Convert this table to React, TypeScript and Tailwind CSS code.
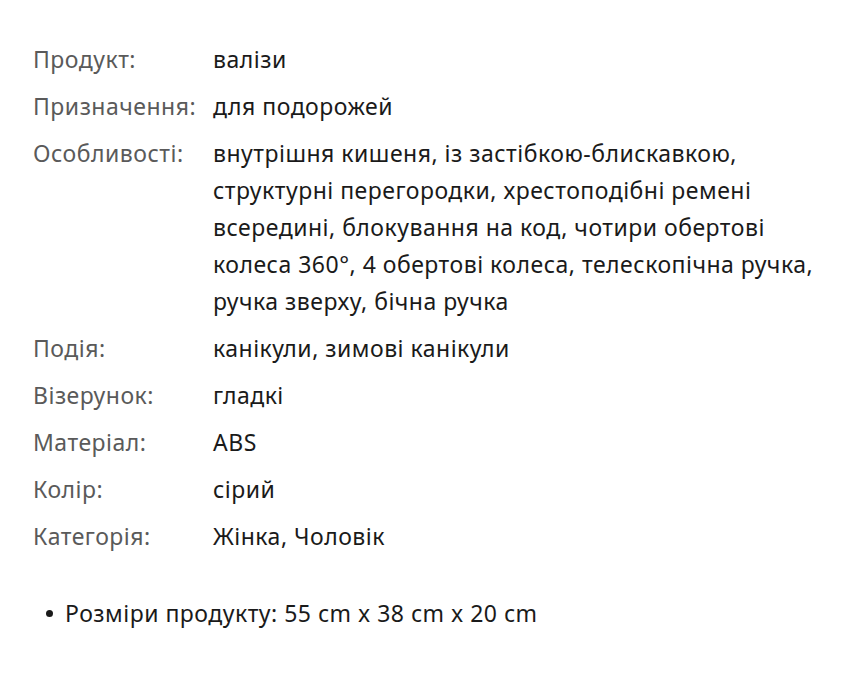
const rows: [string, string[]][] = [
  ["Продукт:", ["валізи"]],
  ["Призначення:", ["для подорожей"]],
  [
    "Особливості:",
    [
      "внутрішня кишеня, із застібкою-блискавкою,",
      "структурні перегородки, хрестоподібні ремені",
      "всередині, блокування на код, чотири обертові",
      "колеса 360°, 4 обертові колеса, телескопічна ручка,",
      "ручка зверху, бічна ручка",
    ],
  ],
  ["Подія:", ["канікули, зимові канікули"]],
  ["Візерунок:", ["гладкі"]],
  ["Матеріал:", ["ABS"]],
  ["Колір:", ["сірий"]],
  ["Категорія:", ["Жінка, Чоловік"]],
];

export default function App() {
  return (
    <div
      className="w-[866px] h-[699px] bg-white pl-[33px] pt-[41px] tracking-[0.5px]"
      style={{ fontFamily: '"Noto Sans", sans-serif' }}
    >
      <div className="flex flex-col gap-[10px]">
        {rows.map(([label, lines]) => (
          <div key={label} className="flex text-[23px] leading-[37px]">
            <div className="w-[180px] shrink-0 text-[#5a5a5a]">{label}</div>
            <div className="w-[640px] text-[#1a1a1a]">
              {lines.map((l) => (
                <div key={l} className="whitespace-nowrap">
                  {l}
                </div>
              ))}
            </div>
          </div>
        ))}
      </div>
      <ul className="mt-[40px] pl-[13px]">
        <li className="flex items-center text-[23px] leading-[37px] text-[#1a1a1a]">
          <span className="w-[7px] h-[7px] rounded-full bg-[#1a1a1a] mr-[12px]" />
          Розміри продукту: 55 cm x 38 cm x 20 cm
        </li>
      </ul>
    </div>
  );
}
